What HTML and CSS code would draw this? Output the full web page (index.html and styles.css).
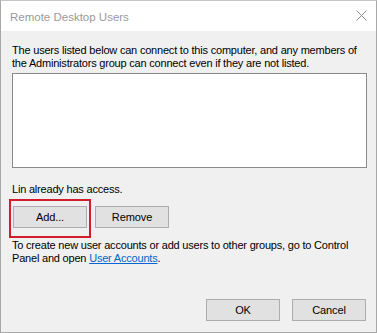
FILE: index.html
```html
<!DOCTYPE html>
<html lang="en">
<head>
<meta charset="utf-8">
<title>Remote Desktop Users</title>
<link rel="stylesheet" href="styles.css">
</head>
<body>
<div class="window">
  <div class="titlebar">
    <span class="title">Remote Desktop Users</span>
    <span class="close" aria-label="Close">
      <svg width="11" height="11" viewBox="0 0 11 11"><path d="M0.5 0.5 L10.5 10.5 M10.5 0.5 L0.5 10.5" stroke="#8c8c8c" stroke-width="1" fill="none"/></svg>
    </span>
  </div>
  <div class="body">
    <p class="text intro">The users listed below can connect to this computer, and any members of<br>the Administrators group can connect even if they are not listed.</p>
    <div class="listbox"></div>
    <p class="text access">Lin already has access.</p>
    <div class="actions">
      <span class="focus-wrap">
        <button class="btn">Add...</button>
        <span class="highlight"></span>
      </span>
      <button class="btn">Remove</button>
    </div>
    <p class="text info">To create new user accounts or add users to other groups, go to Control<br>Panel and open <a class="link" href="#">User Accounts</a>.</p>
    <div class="footer">
      <button class="btn">OK</button>
      <button class="btn">Cancel</button>
    </div>
  </div>
</div>
</body>
</html>
```
FILE: styles.css
```css
html, body {
  margin: 0;
  padding: 0;
  background: #ffffff;
}
.window {
  width: 377px;
  height: 333px;
  box-sizing: border-box;
  border: 1px solid #a8a8a8;
  border-top-color: #c4c4c4;
  background: #f0f0f0;
  font-family: "Liberation Sans", Arial, sans-serif;
  font-size: 11px;
  letter-spacing: -0.2px;
  color: #000;
  display: flex;
  flex-direction: column;
}
.titlebar {
  height: 30px;
  background: #ffffff;
  display: flex;
  align-items: center;
  justify-content: space-between;
  padding: 0 9px 0 9px;
  flex: none;
}
.title {
  font-size: 11.5px;
  letter-spacing: 0;
  color: #9a9a9a;
  line-height: 30px;
  padding-top: 1px;
}
.close {
  display: flex;
  width: 11px;
  height: 11px;
  margin-top: -1px;
}
.body {
  flex: 1;
  display: flex;
  flex-direction: column;
  padding: 13px 9px 11px 11px;
}
.text {
  margin: 0;
  line-height: 13px;
  white-space: nowrap;
}
.listbox {
  margin-top: 3px;
  height: 95px;
  box-sizing: border-box;
  border: 1px solid #8a8a8a;
  background: #ffffff;
}
.access {
  margin-top: 15px;
}
.actions {
  display: flex;
  gap: 8px;
  margin-top: 10px;
  padding-left: 1px;
}
.focus-wrap {
  position: relative;
  display: flex;
}
.highlight {
  position: absolute;
  left: -4px;
  top: -7px;
  right: -4px;
  bottom: -10px;
  border: 2px solid #d01f2b;
  pointer-events: none;
}
.btn {
  width: 74px;
  height: 22px;
  box-sizing: border-box;
  border: 1px solid #adadad;
  background: #e1e1e1;
  font-family: "Liberation Sans", Arial, sans-serif;
  font-size: 11px;
  letter-spacing: -0.1px;
  color: #000;
  padding: 0;
  margin: 0;
}
.info {
  margin-top: 11px;
}
.link {
  color: #0066cc;
  text-decoration: underline;
}
.footer {
  margin-top: auto;
  display: flex;
  justify-content: flex-end;
  gap: 12px;
  padding-right: 1px;
}
```
